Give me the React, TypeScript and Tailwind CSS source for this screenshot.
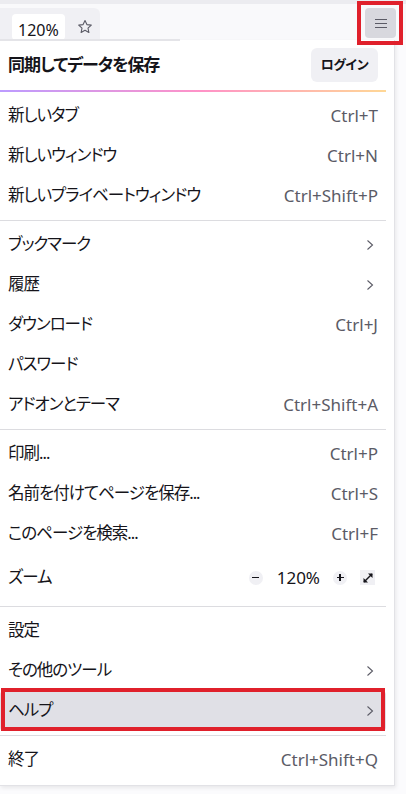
import React from "react";

type Item = {
  label: string;
  shortcut?: string;
  arrow?: boolean;
  active?: boolean;
};

const groups: Item[][] = [
  [
    { label: "新しいタブ", shortcut: "Ctrl+T" },
    { label: "新しいウィンドウ", shortcut: "Ctrl+N" },
    { label: "新しいプライベートウィンドウ", shortcut: "Ctrl+Shift+P" },
  ],
  [
    { label: "ブックマーク", arrow: true },
    { label: "履歴", arrow: true },
    { label: "ダウンロード", shortcut: "Ctrl+J" },
    { label: "パスワード" },
    { label: "アドオンとテーマ", shortcut: "Ctrl+Shift+A" },
  ],
];

function Chevron() {
  return (
    <svg width="8" height="12" viewBox="0 0 8 12" fill="none">
      <path d="M1.5 1.5 L6.5 6 L1.5 10.5" stroke="#5b5b66" strokeWidth="1.1" />
    </svg>
  );
}

function Row({ item }: { item: Item }) {
  return (
    <div
      className={
        "flex h-[40px] items-center justify-between rounded px-2 " +
        (item.active ? "bg-[#e0e0e6]" : "")
      }
    >
      <span className="text-[16.5px] tracking-[-0.06em] text-[#15141a]">{item.label}</span>
      {item.shortcut && (
        <span className="text-[17px] text-[#5b5b66]">{item.shortcut}</span>
      )}
      {item.arrow && (
        <span className="pr-[4px]">
          <Chevron />
        </span>
      )}
    </div>
  );
}

function Separator() {
  return <div className="my-[4px] h-px bg-[#dcdce0]" />;
}

export default function App() {
  return (
    <div
      className="relative h-[794px] w-[406px] overflow-hidden bg-[#fbfbfd] [font-feature-settings:'palt']"
      style={{ fontFamily: "'Noto Sans', 'Noto Sans CJK JP', sans-serif" }}
    >
      {/* toolbar */}
      <div className="h-[4px] bg-[#ececf0]" />
      <div className="flex h-[36px] items-start justify-between overflow-hidden bg-[#f9f9fb]">
        <div className="mt-[4px] flex h-[32px] w-[100px] items-start gap-[12px] rounded-tr-md bg-[#f0f0f4] pl-[12px] pt-[6px]">
          <div className="h-[26px] rounded-sm bg-white px-[6px] pt-[3px] text-[16px] leading-[26px] text-[#15141a]">
            120%
          </div>
          <svg className="mt-[5px]" width="16" height="16" viewBox="0 0 16 16" fill="none">
            <path
              d="M8 1.5 L9.9 5.6 L14.3 6.1 L11 9.1 L11.9 13.5 L8 11.3 L4.1 13.5 L5 9.1 L1.7 6.1 L6.1 5.6 Z"
              stroke="#5b5b66"
              strokeWidth="1.1"
              strokeLinejoin="round"
            />
          </svg>
        </div>
        <div className="mr-[10px] mt-[4px] flex h-[30px] w-[31px] flex-col items-center justify-center gap-[3px] rounded-[4px] bg-[#d8d8de]">
          <div className="h-px w-[12px] bg-[#5b5b66]" />
          <div className="h-px w-[12px] bg-[#5b5b66]" />
          <div className="h-px w-[12px] bg-[#5b5b66]" />
        </div>
      </div>

      {/* menu panel */}
      <div className="relative w-[395px] border-r border-b border-[#e2e2e6] bg-white pr-[8px] pb-[5px] shadow-[1px_2px_4px_rgba(0,0,0,0.08)]">
        <div className="absolute left-0 top-[-1px] h-[2px] w-[180px] bg-[#e4e4e8]" />
        <div className="flex h-[50px] items-center justify-between px-2">
          <span className="text-[17px] font-bold tracking-[-0.06em] text-[#15141a]">
            同期してデータを保存
          </span>
          <button className="h-[34px] w-[67px] rounded-md bg-[#f0f0f4] text-[13px] font-bold tracking-[-0.03em] text-[#15141a]">
            ログイン
          </button>
        </div>
        <div className="h-[1.5px] bg-[linear-gradient(90deg,#9059ff_0%,#ff4aa2_52%,#ffbd4f_100%)] opacity-60" />
        <div className="pt-[4px]">
          {groups.map((g, i) => (
            <div key={i}>
              {i > 0 && <Separator />}
              {g.map((it) => (
                <Row key={it.label} item={it} />
              ))}
            </div>
          ))}
          <Separator />
          <Row item={{ label: "印刷...", shortcut: "Ctrl+P" }} />
          <Row item={{ label: "名前を付けてページを保存...", shortcut: "Ctrl+S" }} />
          <Row item={{ label: "このページを検索...", shortcut: "Ctrl+F" }} />
          <div className="flex h-[48px] items-center justify-between px-2">
            <span className="text-[16.5px] tracking-[-0.06em] text-[#15141a]">ズーム</span>
            <div className="flex items-center">
              <div className="flex h-[14px] w-[14px] items-center justify-center rounded-full bg-[#f0f0f4]">
                <div className="h-[1.5px] w-[7px] bg-[#15141a]" />
              </div>
              <span className="ml-[14px] mr-[13px] text-[17px] text-[#15141a]">120%</span>
              <div className="relative flex h-[14px] w-[14px] items-center justify-center rounded-full bg-[#f0f0f4]">
                <div className="h-[1.5px] w-[7px] bg-[#15141a]" />
                <div className="absolute h-[7px] w-[1.5px] bg-[#15141a]" />
              </div>
              <div className="ml-[13px] mr-[3px] flex h-[15px] w-[15px] items-center justify-center bg-[#f0f0f4]">
                <svg width="12" height="12" viewBox="0 0 12 12" fill="none">
                  <path d="M2 10 L10 2" stroke="#15141a" strokeWidth="1.5" />
                  <path d="M1.5 6 L1.5 10.5 L6 10.5 Z" fill="#15141a" />
                  <path d="M6 1.5 L10.5 1.5 L10.5 6 Z" fill="#15141a" />
                </svg>
              </div>
            </div>
          </div>
          <Separator />
          <Row item={{ label: "設定" }} />
          <Row item={{ label: "その他のツール", arrow: true }} />
          <Row item={{ label: "ヘルプ", arrow: true, active: true }} />
          <Separator />
          <Row item={{ label: "終了", shortcut: "Ctrl+Shift+Q" }} />
        </div>
      </div>

      {/* annotation boxes */}
      <div className="absolute left-[357px] top-[1px] h-[44px] w-[46px] border-[4px] border-[#e0202b]" />
      <div className="absolute left-[1px] top-[688px] h-[43px] w-[384px] border-[4px] border-[#e0202b]" />
    </div>
  );
}
